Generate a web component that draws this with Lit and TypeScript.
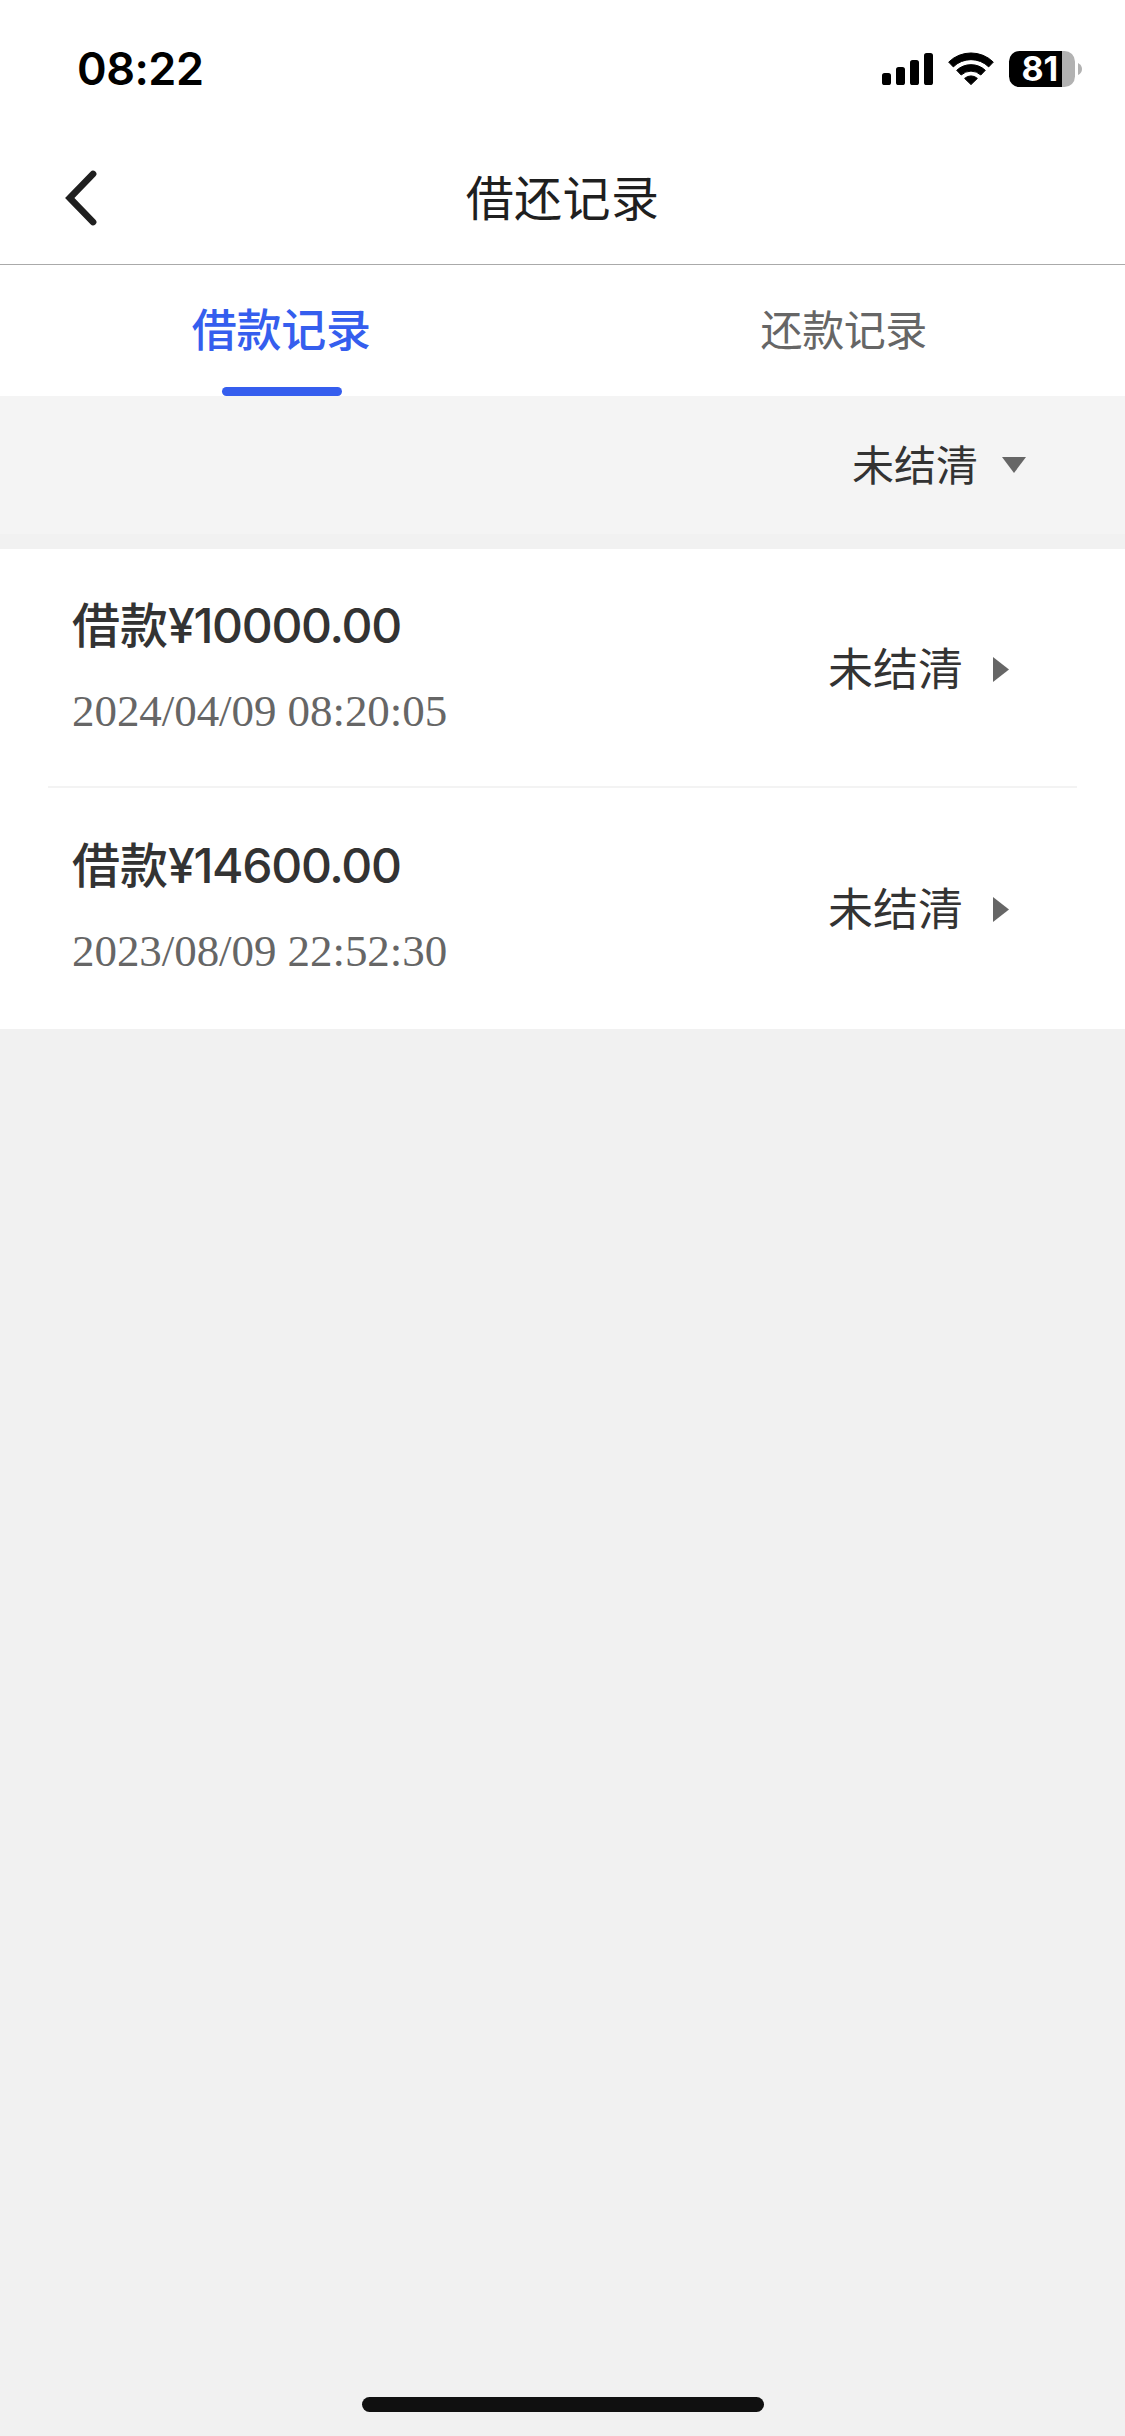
import { LitElement, html, css } from "lit";
import { customElement, property, state } from "lit/decorators.js";
import { classMap } from "lit/directives/class-map.js";

interface LoanRecord {
  amount: string;
  time: string;
  status: string;
}

@customElement("status-bar")
class StatusBar extends LitElement {
  static styles = css`
    :host {
      display: flex;
      justify-content: space-between;
      box-sizing: border-box;
      height: 132px;
      padding: 0 43px 0 77px;
      color: #000;
    }
    .clock {
      padding-top: 42px;
      font: 600 45px/54px Inter, sans-serif;
      letter-spacing: -0.5px;
    }
    .icons {
      display: block;
      margin-top: 48px;
      width: 204px;
      height: 42px;
    }
    .level {
      font: 700 34px Inter, sans-serif;
      letter-spacing: -0.2px;
      fill: #fff;
    }
  `;

  render() {
    return html`
      <div class="clock">08:22</div>
      <svg class="icons" viewBox="878 48 204 42">
        <rect x="882" y="73" width="9" height="12" rx="2.6" />
        <rect x="896" y="67" width="9" height="18" rx="2.6" />
        <rect x="910" y="60" width="9" height="25" rx="2.6" />
        <rect x="924" y="53" width="9" height="32" rx="2.6" />
        <g stroke="#000" stroke-width="1" stroke-linejoin="round">
          <path d="M948.700 62.100A31.800 31.800 0 0 1 993.300 62.100L988.700 66.900A25.200 25.200 0 0 0 953.300 66.900Z" />
          <path d="M956.700 70.300A20.900 20.900 0 0 1 985.300 70.300L980.800 75A14.300 14.300 0 0 0 961.200 75Z" />
          <path d="M964.600 78.400A9.500 9.500 0 0 1 977.400 78.400L971 84.600Z" />
        </g>
        <path fill="#b2b2b2" d="M1061 51H1064.500A10.500 10.500 0 0 1 1075 61.500V76.500A10.500 10.500 0 0 1 1064.500 87H1061Z" />
        <path d="M1062 51H1019.500A10.500 10.500 0 0 0 1009 61.500V76.500A10.500 10.500 0 0 0 1019.500 87H1062Z" />
        <path fill="#b2b2b2" d="M1078 63Q1082 65 1082 69T1078 75Z" />
        <text class="level" x="1021.500" y="81">81</text>
      </svg>
    `;
  }
}

@customElement("nav-header")
class NavHeader extends LitElement {
  @property() heading = "";

  static styles = css`
    :host {
      display: grid;
      grid-template-columns: 120px 1fr 120px;
      align-items: center;
      box-sizing: border-box;
      height: 133px;
      border-bottom: 1px solid #aaa;
      color: #1f1f1f;
    }
    .back {
      display: block;
      width: 36px;
      height: 60px;
      margin-left: 63px;
    }
    .heading {
      padding-bottom: 6px;
      text-align: center;
      font: 400 48px/70px "Noto Sans CJK SC", sans-serif;
      letter-spacing: 0.4px;
    }
  `;

  render() {
    return html`
      <svg class="back" viewBox="63 168 36 60">
        <path d="M93 174L69.800 198L93 222" fill="none" stroke="#1f1f1f" stroke-width="6.800" stroke-linecap="round" />
      </svg>
      <div class="heading">${this.heading}</div>
    `;
  }
}

@customElement("record-row")
class RecordRow extends LitElement {
  @property({ attribute: false }) record!: LoanRecord;

  static styles = css`
    :host {
      display: flex;
      justify-content: space-between;
      box-sizing: border-box;
      height: 240px;
      margin: 0 48px;
      padding: 0 68px 0 24px;
    }
    .amount {
      margin-top: 42px;
      font: 500 48px/70px Inter, "Noto Sans CJK SC", sans-serif;
      color: #333;
    }
    .figure {
      letter-spacing: -1.3px;
    }
    .time {
      margin-top: 24px;
      font: 400 45px/52px "Liberation Serif", serif;
      letter-spacing: -0.06px;
      color: #666;
    }
    .status {
      display: flex;
      align-items: center;
      height: 240px;
      gap: 30px;
      font: 400 45px/66px "Noto Sans CJK SC", sans-serif;
      color: #333;
    }
    .label {
      padding-bottom: 4px;
    }
    .arrow {
      width: 16px;
      height: 25px;
    }
  `;

  render() {
    return html`
      <div>
        <div class="amount">借款<span class="figure">¥${this.record.amount}</span></div>
        <div class="time">${this.record.time}</div>
      </div>
      <div class="status">
        <span class="label">${this.record.status}</span>
        <svg class="arrow" viewBox="0 0 16 25"><path d="M0 0L16 12.500L0 25Z" fill="#666" /></svg>
      </div>
    `;
  }
}

@customElement("app-root")
class AppRoot extends LitElement {
  @state() private activeTab = 0;

  private tabs = ["借款记录", "还款记录"];
  private records: LoanRecord[] = [
    { amount: "10000.00", time: "2024/04/09 08:20:05", status: "未结清" },
    { amount: "14600.00", time: "2023/08/09 22:52:30", status: "未结清" },
  ];

  static styles = css`
    :host {
      display: flex;
      flex-direction: column;
      width: 1125px;
      height: 2436px;
      background: #f1f1f1;
      overflow: hidden;
    }
    .top {
      background: #fff;
    }
    .tabs {
      display: grid;
      grid-template-columns: 1fr 1fr;
      height: 131px;
    }
    .tab {
      display: flex;
      flex-direction: column;
      align-items: center;
      justify-content: space-between;
      font: 400 42px/62px "Noto Sans CJK SC", sans-serif;
      letter-spacing: -0.4px;
      color: #666;
      padding-top: 32px;
    }
    .tab.active {
      font-weight: 500;
      font-size: 45px;
      letter-spacing: -0.2px;
      color: #355eee;
    }
    .marker {
      width: 120px;
      height: 9px;
      margin-left: 1px;
      border-radius: 5px;
    }
    .active .marker {
      background: #355eee;
    }
    .filter {
      display: flex;
      justify-content: flex-end;
      align-items: center;
      gap: 24px;
      box-sizing: border-box;
      height: 138px;
      padding: 0 99px 0 0;
      background: #f4f4f4;
      font: 400 42px/62px "Noto Sans CJK SC", sans-serif;
      color: #333;
    }
    .choice {
      padding-bottom: 5px;
    }
    .caret {
      width: 24px;
      height: 16px;
    }
    .list {
      margin-top: 15px;
      background: #fff;
    }
    .divider {
      height: 2px;
      margin: -3px 48px 1px;
      background: #f3f3f3;
    }
    .home {
      width: 402px;
      height: 15px;
      margin: auto auto 24px 362px;
      border-radius: 8px;
      background: #101010;
    }
  `;

  render() {
    return html`
      <div class="top">
        <status-bar></status-bar>
        <nav-header heading="借还记录"></nav-header>
        <div class="tabs">
          ${this.tabs.map(
            (label, i) => html`
              <div
                class=${classMap({ tab: true, active: i === this.activeTab })}
                @click=${() => (this.activeTab = i)}
              >
                <span>${label}</span>
                <div class="marker"></div>
              </div>
            `
          )}
        </div>
      </div>
      <div class="filter">
        <span class="choice">未结清</span>
        <svg class="caret" viewBox="0 0 24 16"><path d="M0 0H24L12 16Z" fill="#666" /></svg>
      </div>
      <div class="list">
        ${this.records.map(
          (record, i) => html`
            <record-row .record=${record}></record-row>
            ${i < this.records.length - 1 ? html`<div class="divider"></div>` : ""}
          `
        )}
      </div>
      <div class="home"></div>
    `;
  }
}
